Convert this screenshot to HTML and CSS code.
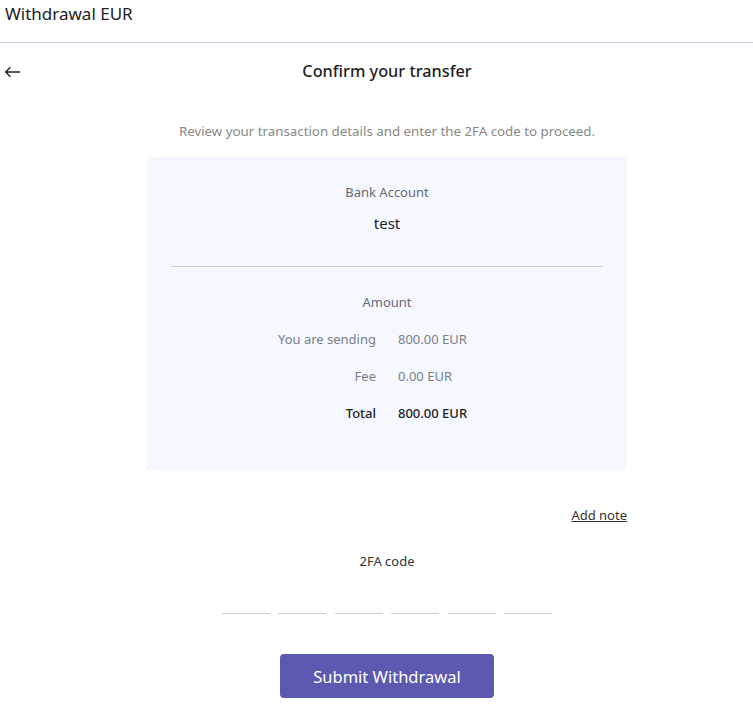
FILE: index.html
```html
<!DOCTYPE html>
<html>
<head>
<meta charset="utf-8">
<link rel="stylesheet" href="styles.css">
</head>
<body>
<header class="topbar">Withdrawal EUR</header>
<div class="titlerow">
  <button class="back" aria-label="Back">
    <svg width="20" height="14" viewBox="0 0 20 14"><path d="M19 7H2M7.5 1.5L2 7l5.5 5.5" fill="none" stroke="#222" stroke-width="1.6"/></svg>
  </button>
  <h1 class="title">Confirm your transfer</h1>
</div>
<main class="content">
  <p class="subtitle">Review your transaction details and enter the 2FA code to proceed.</p>
  <section class="card">
    <div class="label">Bank Account</div>
    <div class="account">test</div>
    <hr class="divider">
    <div class="label amount">Amount</div>
    <div class="rows">
      <div class="row"><span class="k">You are sending</span><span class="v">800.00 EUR</span></div>
      <div class="row"><span class="k">Fee</span><span class="v">0.00 EUR</span></div>
      <div class="row total"><span class="k">Total</span><span class="v">800.00 EUR</span></div>
    </div>
  </section>
  <div class="note-row"><a class="note" href="#">Add note</a></div>
  <div class="code-label">2FA code</div>
  <div class="code">
    <span class="digit"></span><span class="digit"></span><span class="digit"></span><span class="digit"></span><span class="digit"></span><span class="digit"></span>
  </div>
  <button class="submit">Submit Withdrawal</button>
</main>
</body>
</html>
```
FILE: styles.css
```css
* { box-sizing: border-box; }
body {
  margin: 0;
  font-family: "Noto Sans", "Open Sans", sans-serif;
  color: #222;
  background: #fff;
  width: 753px;
  overflow: hidden;
}
.topbar {
  height: 43px;
  padding: 4px 5px 0;
  font-size: 17px;
  line-height: 20px;
  border-bottom: 1px solid #c8d5ea;
}
.titlerow {
  display: flex;
  align-items: center;
  height: 56px;
}
.back {
  border: 0;
  background: none;
  padding: 0 0 0 4px;
  width: 21px;
  display: flex;
  align-items: center;
  margin-top: 2px;
}
.title {
  flex: 1;
  text-align: center;
  margin: 0;
  font-size: 16.3px;
  font-weight: 500;
  color: #222;
}
.content {
  padding-left: 21px;
  display: flex;
  flex-direction: column;
  align-items: center;
}
.subtitle {
  margin: 23px 0 0;
  font-size: 13.3px;
  color: #888;
  line-height: 18px;
}
.card {
  margin-top: 17px;
  width: 480px;
  height: 313px;
  background: #f5f8ff;
  padding: 26px 24px 0;
  display: flex;
  flex-direction: column;
  align-items: center;
}
.label {
  font-size: 13px;
  color: #666b75;
  line-height: 18px;
}
.account {
  margin-top: 12px;
  font-size: 15px;
  line-height: 20px;
  color: #222;
}
.divider {
  width: 100%;
  border: 0;
  border-top: 1px solid #c9ccd6;
  margin: 33px 0 0;
}
.amount { margin-top: 26px; }
.rows {
  margin-top: 19px;
  display: flex;
  flex-direction: column;
  gap: 19px;
  width: 100%;
}
.row {
  display: grid;
  grid-template-columns: 205px 1fr;
  column-gap: 22px;
  font-size: 13px;
  line-height: 18px;
  color: #7a7f88;
}
.row .k { text-align: right; }
.row.total { color: #222; font-weight: 500; }
.note-row {
  width: 480px;
  display: flex;
  justify-content: flex-end;
  margin-top: 36px;
}
.note {
  font-size: 13px;
  color: #333;
  text-decoration: underline;
  line-height: 18px;
}
.code-label {
  margin-top: 28px;
  font-size: 13px;
  line-height: 18px;
  color: #333;
}
.code {
  margin-top: 43px;
  display: flex;
  gap: 8.5px;
}
.digit {
  width: 48px;
  height: 1px;
  background: #c8d0e0;
}
.submit {
  margin-top: 40px;
  width: 214px;
  height: 44px;
  border: 0;
  border-radius: 4px;
  background: #5d59b1;
  color: #fff;
  font-family: inherit;
  font-size: 16.5px;
}
```
